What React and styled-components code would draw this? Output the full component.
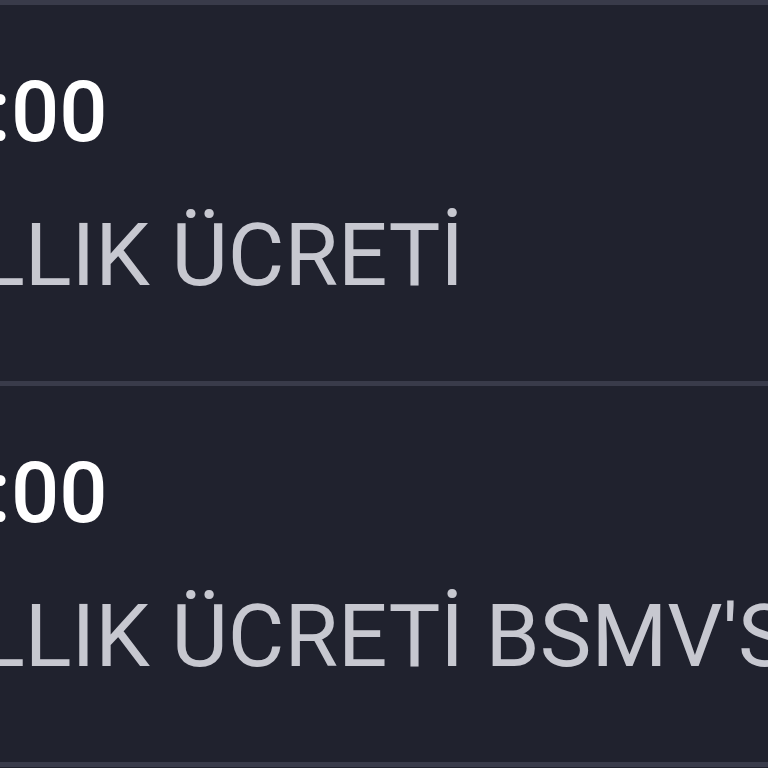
import React from "react";
import styled, { createGlobalStyle } from "styled-components";

const GlobalStyle = createGlobalStyle`
  html, body {
    margin: 0;
    padding: 0;
    background: #20222e;
    overflow: hidden;
  }
  body {
    font-family: Roboto, "Noto Sans", sans-serif;
  }
`;

const List = styled.div`
  border-top: 5px solid #393b4a;
  width: 768px;
  overflow: hidden;
`;

const Row = styled.div`
  padding: 57px 0 76px;
  border-bottom: 5px solid #393b4a;
  display: flex;
  flex-direction: column;
  gap: 43px;
  white-space: nowrap;
`;

const Time = styled.div`
  font-size: 85px;
  line-height: 100px;
  font-weight: 500;
  color: #ffffff;
  margin-left: ${(p) => p.$shift}px;
`;

const Desc = styled.div`
  font-size: 87px;
  line-height: 100px;
  font-weight: 400;
  color: #c7c8d0;
  margin-left: ${(p) => p.$shift}px;
`;

const items = [
  { id: 1, time: "00:00", desc: "YILLIK ÜCRETİ" },
  { id: 2, time: "00:00", desc: "YILLIK ÜCRETİ BSMV'Sİ" },
];

export default function App() {
  return (
    <>
      <GlobalStyle />
      <List>
        {items.map((item) => (
          <Row key={item.id}>
            <Time $shift={-108}>{item.time}</Time>
            <Desc $shift={-98}>{item.desc}</Desc>
          </Row>
        ))}
      </List>
    </>
  );
}
